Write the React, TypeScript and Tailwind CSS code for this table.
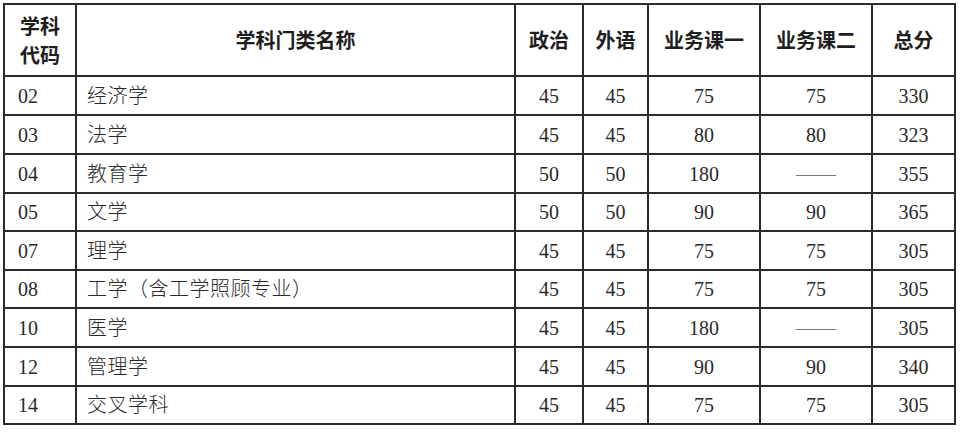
import React from "react";

const rows: [string, string, string, string, string, string, string][] = [
  ["02", "经济学", "45", "45", "75", "75", "330"],
  ["03", "法学", "45", "45", "80", "80", "323"],
  ["04", "教育学", "50", "50", "180", "——", "355"],
  ["05", "文学", "50", "50", "90", "90", "365"],
  ["07", "理学", "45", "45", "75", "75", "305"],
  ["08", "工学（含工学照顾专业）", "45", "45", "75", "75", "305"],
  ["10", "医学", "45", "45", "180", "——", "305"],
  ["12", "管理学", "45", "45", "90", "90", "340"],
  ["14", "交叉学科", "45", "45", "75", "75", "305"],
];

const heights = ["h-[39px]", "h-[39px]", "h-[39px]", "h-[38px]", "h-[39px]", "h-[38px]", "h-[39px]", "h-[39px]", "h-[38px]"];

const cell = "border-2 border-[#2b2b2b]";

export default function App() {
  return (
    <div className="w-[960px] h-[432px] bg-white pl-[3px] pt-[3px]">
      <table className="table-fixed border-collapse w-[951px] text-[#2a2a2a]">
        <colgroup>
          <col className="w-[72px]" />
          <col className="w-[439px]" />
          <col className="w-[68px]" />
          <col className="w-[65px]" />
          <col className="w-[112px]" />
          <col className="w-[112px]" />
          <col className="w-[83px]" />
        </colgroup>
        <thead>
          <tr className="h-[72px] font-['Noto_Sans_CJK_SC',sans-serif] font-bold text-[20px] text-[#1e1e1e]">
            <th className={`${cell} leading-[29px] text-center`}>
              学科
              <br />
              代码
            </th>
            <th className={`${cell} text-center`}>学科门类名称</th>
            <th className={`${cell} text-center`}>政治</th>
            <th className={`${cell} text-center`}>外语</th>
            <th className={`${cell} text-center`}>业务课一</th>
            <th className={`${cell} text-center`}>业务课二</th>
            <th className={`${cell} text-center`}>总分</th>
          </tr>
        </thead>
        <tbody className="font-['Liberation_Serif','Noto_Sans_CJK_SC',serif] text-[20px]">
          {rows.map((r, i) => (
            <tr key={r[0]} className={heights[i]}>
              <td className={`${cell} pl-[13px] text-left`}>{r[0]}</td>
              <td className={`${cell} pl-[10px] text-left font-light tracking-[0.5px]`}>{r[1]}</td>
              <td className={`${cell} text-center`}>{r[2]}</td>
              <td className={`${cell} text-center`}>{r[3]}</td>
              <td className={`${cell} text-center`}>{r[4]}</td>
              <td className={`${cell} text-center ${r[5] === "——" ? "text-[#777]" : ""}`}>{r[5]}</td>
              <td className={`${cell} text-center`}>{r[6]}</td>
            </tr>
          ))}
        </tbody>
      </table>
    </div>
  );
}
